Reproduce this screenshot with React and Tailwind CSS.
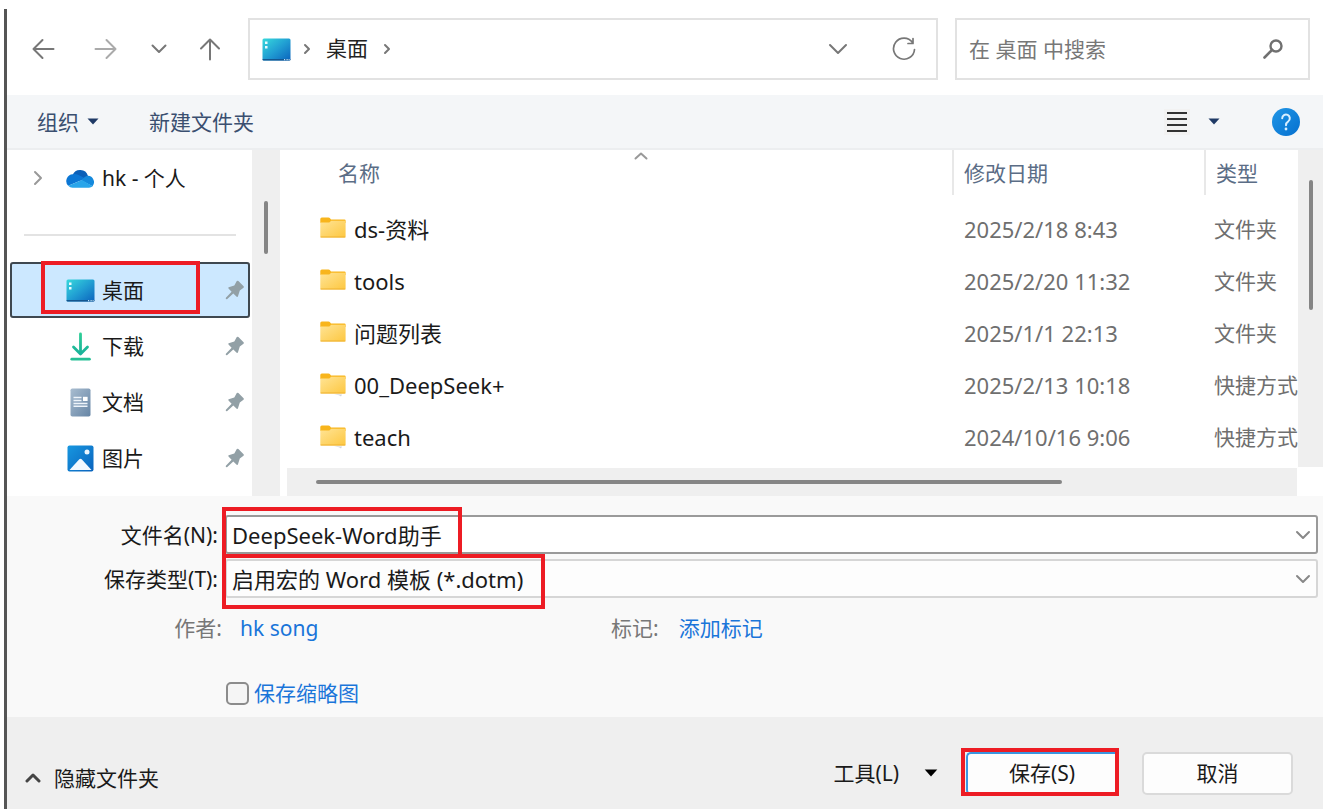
const UI_FONT = "font-['Noto_Sans','Noto_Sans_CJK_SC',sans-serif]";

function DesktopIcon({ id }) {
  return (
    <svg width="29" height="23" viewBox="0 0 29 23" aria-hidden="true" className="shrink-0">
      <defs>
        <linearGradient id={id} x1="0" y1="0" x2="1" y2="1">
          <stop offset="0" stopColor="#37d9dc" />
          <stop offset="0.5" stopColor="#219fd3" />
          <stop offset="1" stopColor="#0b63bd" />
        </linearGradient>
      </defs>
      <rect x="0.5" y="0.5" width="28" height="22" rx="1.5" fill={`url(#${id})`} />
      <path d="M0.5 21h28v0.5q0 1-1 1h-26q-1 0-1-1z" fill="#14568f" />
      <path d="M3 3.5h2.5v2.5h-2.5zM3 8h2.5v2.5h-2.5z" fill="#e9fbff" />
      <path d="M22 21h1.2v1.2h-1.2zM24.5 21h1.2v1.2h-1.2zM26.6 21h1v1.2h-1z" fill="#bfe4ff" />
    </svg>
  );
}

function CloudIcon() {
  return (
    <svg width="29" height="19" viewBox="0 0 29 19" aria-hidden="true" className="shrink-0">
      <path d="M6.500 6.300A8.200 8.200 0 0 1 22 7L14.500 11.500Z" fill="#0a5fb8" />
      <path d="M6.800 5.300a6.800 6.800 0 0 0-4.600 11.500L19.500 9.500 12 5.800a8 8 0 0 0-5.200-.5z" fill="#0b76d4" />
      <path d="M22 6.800a6.400 6.400 0 0 1 4.500 10.500L15 11.300 19.500 7.500z" fill="#1489dc" />
      <path d="M2.200 16.800A6 6 0 0 0 6.900 18.700H23a6 6 0 0 0 3.700-1.500L16 10.900z" fill="#29a5ea" />
    </svg>
  );
}

function DownloadIcon() {
  return (
    <svg width="29" height="29" viewBox="0 0 29 29" fill="none" aria-hidden="true" className="shrink-0">
      <defs>
        <linearGradient id="dl" x1="0" y1="0" x2="0" y2="29" gradientUnits="userSpaceOnUse">
          <stop offset="0" stopColor="#2fd096" />
          <stop offset="1" stopColor="#12a79b" />
        </linearGradient>
      </defs>
      <path d="M14.500 2V21M7.500 15L14.500 22L21.500 15" stroke="url(#dl)" strokeWidth="2.800" strokeLinecap="round" strokeLinejoin="round" />
      <path d="M5.800 27.200H23.400" stroke="#25bf95" strokeWidth="2.800" strokeLinecap="round" />
    </svg>
  );
}

function DocumentIcon() {
  return (
    <svg width="29" height="29" viewBox="0 0 29 29" aria-hidden="true" className="shrink-0">
      <defs>
        <linearGradient id="doc" x1="0" y1="0" x2="1" y2="1">
          <stop offset="0" stopColor="#a9bdd0" />
          <stop offset="1" stopColor="#6685a5" />
        </linearGradient>
      </defs>
      <rect x="4.500" y="0.500" width="20" height="28" rx="1.800" fill="url(#doc)" />
      <path d="M7.500 9.500h8M7.500 12.500h8M7.500 15.500h14M7.500 18.300h14" stroke="#eef4fa" strokeWidth="1.500" />
      <rect x="17" y="8.800" width="4.600" height="4.200" fill="#fff" />
    </svg>
  );
}

function PictureIcon() {
  return (
    <svg width="29" height="27" viewBox="0 0 29 27" aria-hidden="true" className="shrink-0">
      <defs>
        <linearGradient id="pic" x1="0" y1="0" x2="1" y2="1">
          <stop offset="0" stopColor="#1797e0" />
          <stop offset="1" stopColor="#0a63bd" />
        </linearGradient>
      </defs>
      <rect x="1.500" y="0.500" width="26" height="26" rx="2" fill="url(#pic)" />
      <path d="M3.500 25L13.300 14.300Q14.500 13.200 15.700 14.300L25.500 25Z" fill="#f3f9ff" />
      <circle cx="21" cy="7" r="2.500" fill="#eaf6ff" />
    </svg>
  );
}

function PinIcon() {
  return (
    <svg width="20" height="20" viewBox="0 0 20 20" fill="#92a0a6" aria-hidden="true" className="shrink-0">
      <path d="M11.800 1Q12.600 0.300 13.400 1L18.600 6.200Q19.300 7 18.500 7.800L14.800 10.500L12.900 16.500Q12.400 17.300 11.700 16.700L8.300 13.400L2 19.200L0.800 18.900L0.900 17.800L6.600 11.700L3.500 8.500Q2.900 7.800 3.700 7.300L9.300 5.500Z" />
    </svg>
  );
}

function FolderIcon({ id, shortcut }) {
  return (
    <svg width="26" height="24" viewBox="0 0 26 24" aria-hidden="true" className="shrink-0">
      <defs>
        <linearGradient id={id} x1="0" y1="0" x2="1" y2="1">
          <stop offset="0" stopColor="#ffe496" />
          <stop offset="1" stopColor="#fdc740" />
        </linearGradient>
      </defs>
      <path d="M0.300 2Q0.300 0.500 1.800 0.500H8.500Q9.500 0.500 10 1.300L11 2.600H24.500Q25.600 2.600 25.600 3.600V6H0.300Z" fill="#f8b51c" />
      <path d="M0.300 5.400H9.300L11.200 3.700H25.600V19Q25.600 20.500 24.300 20.500H1.500Q0.300 20.500 0.300 19Z" fill={`url(#${id})`} />
      <path d="M0.500 20H25.400" stroke="#eeb02f" strokeWidth="1" />
      {shortcut && <path d="M14 21.300L22 21.600 21 23.500 19 22.300Z" fill="#d2d6da" />}
    </svg>
  );
}

function Stroke({ d, w, h, color = "#777", sw = 2, className = "" }) {
  return (
    <svg width={w} height={h} viewBox={`0 0 ${w} ${h}`} fill="none" stroke={color} strokeWidth={sw} strokeLinecap="round" strokeLinejoin="round" aria-hidden="true" className={`shrink-0 ${className}`}>
      <path d={d} />
    </svg>
  );
}

function Caret({ color, w = 12, h = 7 }) {
  return (
    <svg width={w} height={h} viewBox="0 0 12 7" aria-hidden="true" className="shrink-0">
      <path d="M0.500 0.500H11.500L6 6.500Z" fill={color} />
    </svg>
  );
}

const places = [
  { name: "桌面", icon: <DesktopIcon id="desk-side" />, selected: true },
  { name: "下载", icon: <DownloadIcon /> },
  { name: "文档", icon: <DocumentIcon /> },
  { name: "图片", icon: <PictureIcon /> },
];

const files = [
  { name: "ds-资料", date: "2025/2/18 8:43", type: "文件夹" },
  { name: "tools", date: "2025/2/20 11:32", type: "文件夹" },
  { name: "问题列表", date: "2025/1/1 22:13", type: "文件夹" },
  { name: "00_DeepSeek+", date: "2025/2/13 10:18", type: "快捷方式" },
  { name: "teach", date: "2024/10/16 9:06", type: "快捷方式" },
];

function AddressBar() {
  return (
    <div className="flex h-[86px] items-center pb-[6px] pr-[13px]">
      <nav className="flex w-[241px] shrink-0 items-center pl-6">
        <button aria-label="后退" className="mr-[39px] flex">
          <Stroke w={24} h={24} d="M22.500 12H2.500M11.500 3L2.500 12L11.500 21" />
        </button>
        <button aria-label="前进" className="mr-8 flex">
          <Stroke w={24} h={24} color="#aaa" d="M1.500 12H21.500M12.500 3L21.500 12L12.500 21" />
        </button>
        <button aria-label="最近位置" className="mr-[30px] flex">
          <Stroke w={18} h={12} color="#777" d="M2.500 2.500L9 9L15.500 2.500" />
        </button>
        <button aria-label="上移" className="flex">
          <Stroke w={24} h={24} d="M12 22.500V2.500M3 11.500L12 2.500L21 11.500" />
        </button>
      </nav>
      <div className="flex h-[62px] flex-1 items-center border-2 border-[#e2e2e2] pl-3 pr-5">
        <DesktopIcon id="desk-address" />
        <Stroke w={8} h={12} className="ml-3" d="M2 2L6 6L2 10" />
        <a href="#desktop" className="ml-[15px] pb-0.5 text-[21px] leading-7 text-[#222]">桌面</a>
        <Stroke w={8} h={12} className="ml-[15px]" d="M2 2L6 6L2 10" />
        <button aria-label="历史记录" className="ml-auto mr-11 flex">
          <Stroke w={20} h={12} d="M2 2L10 10L18 2" />
        </button>
        <button aria-label="刷新" className="flex">
          <Stroke w={24} h={24} sw={1.7} d="M20.500 5.500A10.500 10.500 0 1 0 22.500 12.500M21 1.500V6.500H16" />
        </button>
      </div>
      <div className="ml-[17px] flex h-[62px] w-[355px] items-center border-2 border-[#e2e2e2] pl-3 pr-6">
        <input aria-label="搜索" placeholder="在 桌面 中搜索" className="min-w-0 flex-1 bg-transparent text-[21px] leading-7 outline-none placeholder:text-[#777]" />
        <svg width="22" height="22" viewBox="0 0 22 22" fill="none" stroke="#707070" aria-hidden="true">
          <circle cx="14" cy="8" r="5.500" strokeWidth="2.400" />
          <path d="M10 12L2.500 19.500" strokeWidth="2.600" strokeLinecap="round" />
        </svg>
      </div>
    </div>
  );
}

function Toolbar() {
  return (
    <div className="flex h-[55px] items-center border-b-2 border-[#eceef0] bg-[#f4f6f8] pl-[30px] pr-[23px] text-[21px] leading-7 text-[#3a4f70]">
      <button className="flex items-center gap-2">
        组织 <Caret color="#1f3a66" />
      </button>
      <button className="ml-[50px]">新建文件夹</button>
      <button aria-label="视图" className="ml-auto flex items-center gap-[18px]">
        <span className="flex size-[26px] items-center justify-center bg-[#f2f2f2]">
          <svg width="20" height="20" viewBox="0 0 20 20" stroke="#333" strokeWidth="2" aria-hidden="true">
            <path d="M0 1H20M0 7H20M0 13H20M0 19H20" />
          </svg>
        </span>
        <Caret color="#1f3a66" />
      </button>
      <button aria-label="帮助" className="ml-[52px] flex">
        <svg width="28" height="28" viewBox="0 0 28 28" fill="none" aria-hidden="true">
          <defs>
            <linearGradient id="help" x1="0" y1="0" x2="1" y2="1">
              <stop offset="0" stopColor="#2196e6" />
              <stop offset="1" stopColor="#0570cf" />
            </linearGradient>
          </defs>
          <circle cx="14" cy="14" r="14" fill="url(#help)" />
          <path d="M10.200 10.300A3.800 3.800 0 1 1 16.300 13.300Q14 14.700 14 17.200" stroke="#d9efff" strokeWidth="2" strokeLinecap="round" />
          <circle cx="14" cy="21" r="1.400" fill="#d9efff" />
        </svg>
      </button>
    </div>
  );
}

function Sidebar() {
  return (
    <aside className="flex w-[273px] shrink-0">
      <div className="flex-1 text-[21px] text-[#1a1a1a]">
        <button className="flex h-[56px] w-full items-center pl-[26px]">
          <Stroke w={10} h={16} color="#999" d="M2 2L8 8L2 14" />
          <span className="ml-[23px]"><CloudIcon /></span>
          <span className="ml-[7px] pt-0.5">hk - 个人</span>
        </button>
        <hr className="mb-[26px] ml-[17px] mr-4 mt-[28px] border-t-2 border-[#e3e3e3]" />
        <ul>
          {places.map((p) => (
            <li key={p.name} className="relative pl-[3px] pr-[2px]">
              <button className={p.selected ? "flex h-[56px] w-full items-center rounded-[3px] border-2 border-[#3f4850] bg-[#cce8ff] pl-[54px] pr-[3px]" : "flex h-[56px] w-full items-center pl-[56px] pr-[5px]"}>
                {p.icon}
                <span className="ml-[7px] pt-0.5">{p.name}</span>
                <span className="ml-auto"><PinIcon /></span>
              </button>
              {p.selected && <span className="pointer-events-none absolute -top-px left-[34px] h-[53px] w-[159px] border-4 border-[#ed1c24]" />}
            </li>
          ))}
        </ul>
      </div>
      <div className="flex w-7 flex-col items-center bg-[#efefef] pt-[51px]">
        <div className="h-[53px] w-1 rounded-full bg-[#858585]" />
      </div>
    </aside>
  );
}

function FileList() {
  return (
    <div className="flex min-w-0 flex-1 pl-[7px]">
      <div className="flex min-w-0 flex-1 flex-col">
        <table className="w-full table-fixed border-collapse text-left text-[21px] leading-7">
          <colgroup>
            <col />
            <col className="w-[252px]" />
            <col className="w-[93px]" />
          </colgroup>
          <thead>
            <tr className="text-[#5b6d86]">
              <th className="p-0 pb-2 font-normal">
                <div className="relative flex h-[45px] items-center pl-[51px]">
                  名称
                  <Stroke w={14} h={8} color="#999" className="absolute left-[347px] top-[2px]" d="M1.500 6.500L7 1.500L12.500 6.500" />
                </div>
              </th>
              <th className="p-0 pb-2 font-normal">
                <div className="flex h-[45px] items-center border-l-2 border-[#e8e8e8] pl-[10px]">修改日期</div>
              </th>
              <th className="p-0 pb-2 font-normal">
                <div className="flex h-[45px] items-center border-l-2 border-[#e8e8e8] pl-[10px]">类型</div>
              </th>
            </tr>
          </thead>
          <tbody>
            {files.map((f, i) => (
              <tr key={f.name} className="h-[52px] text-[#6f6f6f]">
                <td className="p-0">
                  <div className="flex items-center gap-2 pl-[33px] text-[22px] text-[#1a1a1a]">
                    <FolderIcon id={`folder-${i}`} shortcut={f.type === "快捷方式"} />
                    {f.name}
                  </div>
                </td>
                <td className="p-0 pl-3 text-[22px]">{f.date}</td>
                <td className="whitespace-nowrap p-0 pl-[10px]">{f.type}</td>
              </tr>
            ))}
          </tbody>
        </table>
        <div className="mt-[5px] flex h-7 items-center bg-[#efefef] pl-[29px]">
          <div className="h-1 w-[76%] rounded-full bg-[#858585]" />
        </div>
      </div>
      <div className="mb-[29px] ml-px flex w-[25px] justify-center bg-[#efefef] pt-[30px]">
        <div className="h-[130px] w-1 rounded-full bg-[#858585]" />
      </div>
    </div>
  );
}

const fieldLabel = "w-[211px] shrink-0 text-right";

function DetailsForm() {
  return (
    <div className="h-[221px] bg-[#f9f9f9] pr-[5px] pt-[19px] text-[21px] leading-7">
      <div className="flex items-center">
        <label htmlFor="file-name" className={fieldLabel}>文件名(N):</label>
        <div className="relative ml-[7px] flex h-[39px] flex-1 items-center rounded-[3px] border-2 border-[#9a9a9a] bg-white pl-[5px] pr-[5px]">
          <input id="file-name" defaultValue="DeepSeek-Word助手" className="min-w-0 flex-1 bg-transparent text-[22px] outline-none" />
          <Stroke w={16} h={10} color="#888" d="M2 2L8 8L14 2" />
          <span className="pointer-events-none absolute -left-[5px] -top-[10px] h-[51px] w-[240px] border-4 border-[#ed1c24]" />
        </div>
      </div>
      <div className="mt-[5px] flex items-center">
        <label htmlFor="file-type" className={fieldLabel}>保存类型(T):</label>
        <div className="relative ml-[7px] flex h-[39px] flex-1 items-center rounded-[3px] border-2 border-[#d6d6d6] bg-[#fdfdfd] pl-[5px] pr-[5px]">
          <select id="file-type" className="min-w-0 flex-1 appearance-none bg-transparent text-[22px] outline-none">
            <option>启用宏的 Word 模板 (*.dotm)</option>
          </select>
          <Stroke w={16} h={10} color="#888" d="M2 2L8 8L14 2" />
          <span className="pointer-events-none absolute -left-[5px] -top-[7px] h-[55px] w-[323px] border-4 border-[#ed1c24]" />
        </div>
      </div>
      <div className="mt-4 flex text-[#777]">
        <span className="w-[215px] text-right">作者:</span>
        <a href="#author" className="ml-[18px] w-[364px] text-[#1a75d9]">hk song</a>
        <span className="ml-[7px]">标记:</span>
        <a href="#tags" className="ml-5 text-[#1a75d9]">添加标记</a>
      </div>
      <label className="ml-[219px] mt-[37px] flex w-fit items-center gap-[5px] text-[#1a75d9]">
        <input type="checkbox" className="size-[23px] appearance-none rounded-[5px] border-2 border-[#8c8c8c] bg-[#f5f5f5]" />
        保存缩略图
      </label>
    </div>
  );
}

function Footer() {
  return (
    <footer className="flex h-[92px] items-center bg-[#efefef] pl-[18px] pr-[30px] pt-5 text-[21px] leading-7">
      <button className="flex items-center gap-[13px] pt-[10px]">
        <Stroke w={16} h={10} color="#444" sw={3} d="M2 8L8 2L14 8" />
        隐藏文件夹
      </button>
      <button className="ml-auto flex items-center gap-[25px]">
        工具(L)
        <Caret color="#000" w={14} h={8} />
      </button>
      <div className="relative ml-7">
        <button className="h-[43px] w-[150px] rounded-[5px] rounded-r-none border-2 border-r-0 border-[#3b96e0] bg-[#fdfdfd]">保存(S)</button>
        <span className="pointer-events-none absolute -left-[5px] -top-1 h-[48px] w-[158px] border-4 border-[#ed1c24]" />
      </div>
      <button className="ml-[26px] h-[43px] w-[151px] rounded-[5px] border-2 border-[#dadada] bg-[#fdfdfd]">取消</button>
    </footer>
  );
}

export default function App() {
  return (
    <div className={`min-h-screen bg-white pb-[3px] pl-1 pr-1 pt-[9px] text-[#1a1a1a] ${UI_FONT}`}>
      <main className="border-l-[3px] border-[#555]">
        <AddressBar />
        <Toolbar />
        <div className="flex h-[346px]">
          <Sidebar />
          <FileList />
        </div>
        <DetailsForm />
        <Footer />
      </main>
    </div>
  );
}
